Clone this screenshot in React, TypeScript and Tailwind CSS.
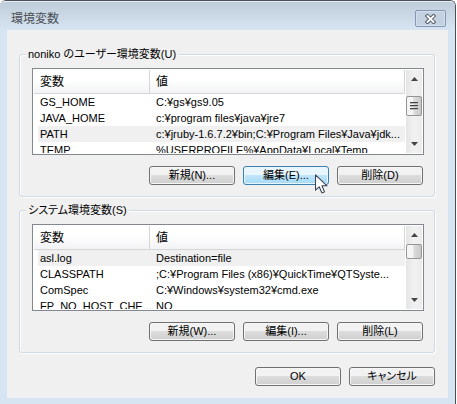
type Variable = { name: string; value: string }

const USER_VARIABLES: Variable[] = [
  { name: 'GS_HOME', value: 'C:¥gs¥gs9.05' },
  { name: 'JAVA_HOME', value: 'c:¥program files¥java¥jre7' },
  { name: 'PATH', value: 'c:¥jruby-1.6.7.2¥bin;C:¥Program Files¥Java¥jdk...' },
  { name: 'TEMP', value: '%USERPROFILE%¥AppData¥Local¥Temp' },
]

const SYSTEM_VARIABLES: Variable[] = [
  { name: 'asl.log', value: 'Destination=file' },
  { name: 'CLASSPATH', value: ';C:¥Program Files (x86)¥QuickTime¥QTSyste...' },
  { name: 'ComSpec', value: 'C:¥Windows¥system32¥cmd.exe' },
  { name: 'FP_NO_HOST_CHE...', value: 'NO' },
]

function DialogButton({ label, hot = false }: { label: string; hot?: boolean }) {
  return (
    <button
      type="button"
      className={`w-[86px] h-[19px] rounded-[3px] border text-[11px] leading-none whitespace-nowrap text-black ${
        hot
          ? 'border-[#3c7fb1] bg-linear-to-b from-[#eaf6fd] from-45% via-[#bee6fd] via-50% to-[#a7d9f5] shadow-[inset_0_0_0_1px_#e8f6fd]'
          : 'border-[#707070] bg-linear-to-b from-[#f2f2f2] from-45% via-[#dddddd] via-50% to-[#cfcfcf] shadow-[inset_0_0_0_1px_#f6f6f6]'
      }`}
    >
      {label}
    </button>
  )
}

function Cursor() {
  return (
    <svg className="absolute left-[72px] top-2 pointer-events-none" width="14" height="21" viewBox="0 0 14 21" aria-hidden="true">
      <path d="M.5 .8V16.2L4.2 12.8L6.7 18.5Q8 19.3 9.4 17.6L7 11.8H12Z" fill="#fff" stroke="#3b4354" strokeWidth="1.1" strokeLinejoin="round" />
    </svg>
  )
}

function ScrollBar({ grip = false }: { grip?: boolean }) {
  return (
    <div className="w-4 flex-none flex flex-col bg-linear-to-r from-[#e5e5e5] via-[#f1f1f1] to-[#ececec]">
      <button type="button" aria-label="上へスクロール" className="h-[18px] flex items-center justify-center">
        <svg width="7" height="4" viewBox="0 0 7 4">
          <path d="M3.5 0L7 4H0Z" fill="#444" />
        </svg>
      </button>
      <div className={`flex-1 flex flex-col ${grip ? 'pt-2' : 'pt-0'}`}>
        <div
          className={`border border-[#959595] rounded-[2px] bg-linear-to-r from-[#f5f5f5] from-40% via-[#dcdcdc] via-50% to-[#c8c8c8] flex flex-col items-center justify-center gap-px ${
            grip ? 'h-5' : 'h-[15px]'
          }`}
        >
          {grip && (
            <>
              <div className="w-2 h-0.5 border-t border-[#444] bg-[#bbb]" />
              <div className="w-2 h-0.5 border-t border-[#444] bg-[#bbb]" />
              <div className="w-2 h-0.5 border-t border-[#444] bg-[#bbb]" />
            </>
          )}
        </div>
      </div>
      <button type="button" aria-label="下へスクロール" className="h-[18px] flex items-center justify-center">
        <svg width="7" height="4" viewBox="0 0 7 4">
          <path d="M0 0H7L3.5 4Z" fill="#444" />
        </svg>
      </button>
    </div>
  )
}

function VariableList({ variables, selected, grip }: { variables: Variable[]; selected: number; grip?: boolean }) {
  return (
    <div className="h-[87px] border border-[#828790] bg-white p-px flex">
      <div className="flex-1 min-w-0 overflow-hidden pr-px">
        <table className="w-full table-fixed border-separate border-spacing-0 text-left">
          <thead>
            <tr className="bg-linear-to-b from-white from-40% to-[#f1f2f4] leading-[22px]">
              <th className="w-[116px] h-6 p-0 pl-[6px] font-normal border-r border-b border-[#d5d5d5]">変数</th>
              <th className="h-6 p-0 pl-[6px] font-normal border-r border-b border-[#d5d5d5]">値</th>
            </tr>
          </thead>
          <tbody className="text-[11px] leading-4">
            {variables.map((v, i) => (
              <tr key={v.name} className={i === selected ? 'bg-[#f0f0f0]' : 'bg-white'}>
                <td className="h-4 p-0 pl-[2px] border-l-4 border-white whitespace-nowrap">{v.name}</td>
                <td className="h-4 p-0 pl-[6px] whitespace-nowrap">{v.value}</td>
              </tr>
            ))}
          </tbody>
        </table>
      </div>
      <ScrollBar grip={grip} />
    </div>
  )
}

function VariableGroup({ title, children }: { title: string; children: React.ReactNode }) {
  return (
    <fieldset className="min-w-0 border border-[#cddae6] rounded-[3px] shadow-[inset_1px_1px_0_#fff,1px_1px_0_#fff] pl-3 pr-[10px] pt-[5px] pb-[11px]">
      <legend className="-ml-[6px] px-[2px] bg-[#f0f0f0] text-[11px] leading-[18px]">{title}</legend>
      {children}
    </fieldset>
  )
}

export default function App() {
  return (
    <div className="bg-white pr-px font-['Liberation_Sans','Noto_Sans_CJK_JP',sans-serif] text-xs text-black [font-feature-settings:'palt']">
      <div className="rounded-t-[6px] border-t border-r border-[#4a4f57] bg-[#d7e4f1] pb-[6px]">
        {/* Title bar */}
        <header className="h-[29px] rounded-t-[5px] border-t border-[#e6edf5] bg-linear-to-b from-[#bfcddb] to-[#d7e4f1] pl-[11px] pr-[9px] pt-2 flex items-start justify-between">
          <h1 className="leading-[18px] text-[#4a4f55]">環境変数</h1>
          <button
            type="button"
            aria-label="閉じる"
            className="w-[31px] h-[17px] rounded-[2px] border border-[#8595b5] bg-[#c3d1e1] shadow-[inset_0_0_0_1px_#d3dfeb] flex items-center justify-center"
          >
            <svg width="11" height="10" viewBox="0 0 11 10" fill="none">
              <path d="M2.5 2L8.5 8M8.5 2L2.5 8" stroke="#50566a" strokeWidth="3.8" strokeLinecap="square" />
              <path d="M2.5 2L8.5 8M8.5 2L2.5 8" stroke="#fff" strokeWidth="1.9" strokeLinecap="square" />
            </svg>
          </button>
        </header>

        <main className="mx-[7px] bg-[#f0f0f0] pl-3 pr-[13px] pt-[15px] pb-3">
          <div className="flex flex-col gap-1">
            <VariableGroup title="noniko のユーザー環境変数(U)">
              <VariableList variables={USER_VARIABLES} selected={2} grip />
              <div className="mt-[11px] mr-px flex justify-end gap-2">
                <DialogButton label="新規(N)..." />
                <div className="relative flex">
                  <DialogButton label="編集(E)..." hot />
                  <Cursor />
                </div>
                <DialogButton label="削除(D)" />
              </div>
            </VariableGroup>

            <VariableGroup title="システム環境変数(S)">
              <VariableList variables={SYSTEM_VARIABLES} selected={0} />
              <div className="mt-[11px] mr-px flex justify-end gap-2">
                <DialogButton label="新規(W)..." />
                <DialogButton label="編集(I)..." />
                <DialogButton label="削除(L)" />
              </div>
            </VariableGroup>
          </div>

          <div className="mt-[14px] flex justify-end gap-2">
            <DialogButton label="OK" />
            <DialogButton label="キャンセル" />
          </div>
        </main>
      </div>
    </div>
  )
}
